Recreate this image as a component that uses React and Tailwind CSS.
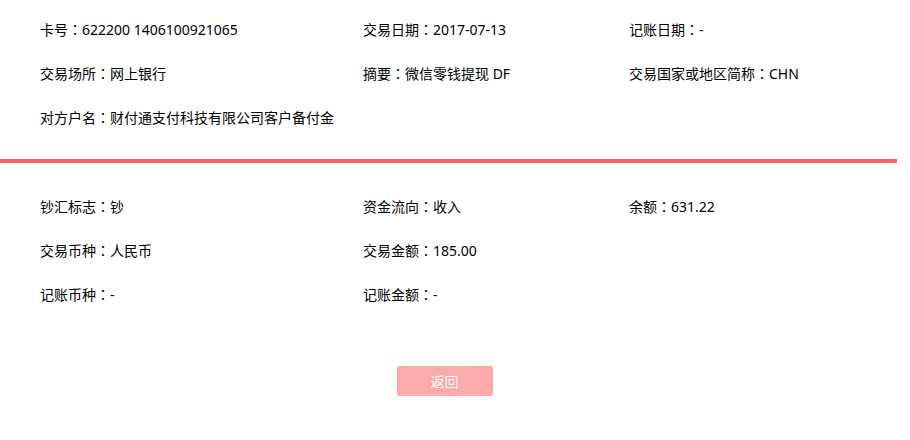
const font = { fontFamily: '"Noto Sans", "Noto Sans CJK SC", sans-serif' };

function Item({ label, value, w }) {
  return (
    <div className={`${w || ""} h-[44px] flex items-center whitespace-nowrap`}>
      <span>{label}</span>
      <span style={{ fontFamily: '"Noto Sans CJK TC", sans-serif' }}>：</span>
      <span>{value}</span>
    </div>
  );
}

export default function App() {
  return (
    <div className="w-[897px] bg-white text-[14px] text-black min-h-[440px]" style={font}>
      <div className="pl-[40px] pt-[7px] pb-[20px]">
        <div className="flex">
          <Item w="w-[323px]" label="卡号" value="622200 1406100921065" />
          <Item w="w-[266px]" label="交易日期" value="2017-07-13" />
          <Item label="记账日期" value="-" />
        </div>
        <div className="flex">
          <Item w="w-[323px]" label="交易场所" value="网上银行" />
          <Item w="w-[266px]" label="摘要" value="微信零钱提现 DF" />
          <Item label="交易国家或地区简称" value="CHN" />
        </div>
        <div className="flex">
          <Item label="对方户名" value="财付通支付科技有限公司客户备付金" />
        </div>
      </div>
      <div className="h-[4px] bg-[#ff5f62]"></div>
      <div className="pl-[40px] pt-[21px]">
        <div className="flex">
          <Item w="w-[323px]" label="钞汇标志" value="钞" />
          <Item w="w-[266px]" label="资金流向" value="收入" />
          <Item label="余额" value="631.22" />
        </div>
        <div className="flex">
          <Item w="w-[323px]" label="交易币种" value="人民币" />
          <Item w="w-[266px]" label="交易金额" value="185.00" />
        </div>
        <div className="flex">
          <Item w="w-[323px]" label="记账币种" value="-" />
          <Item w="w-[266px]" label="记账金额" value="-" />
        </div>
      </div>
      <div className="flex justify-center pt-[50px]">
        <button className="ml-[-8px] w-[96px] h-[30px] rounded-[2px] bg-[#fcaaab] text-white text-[14px]" style={font}>返回</button>
      </div>
    </div>
  );
}
